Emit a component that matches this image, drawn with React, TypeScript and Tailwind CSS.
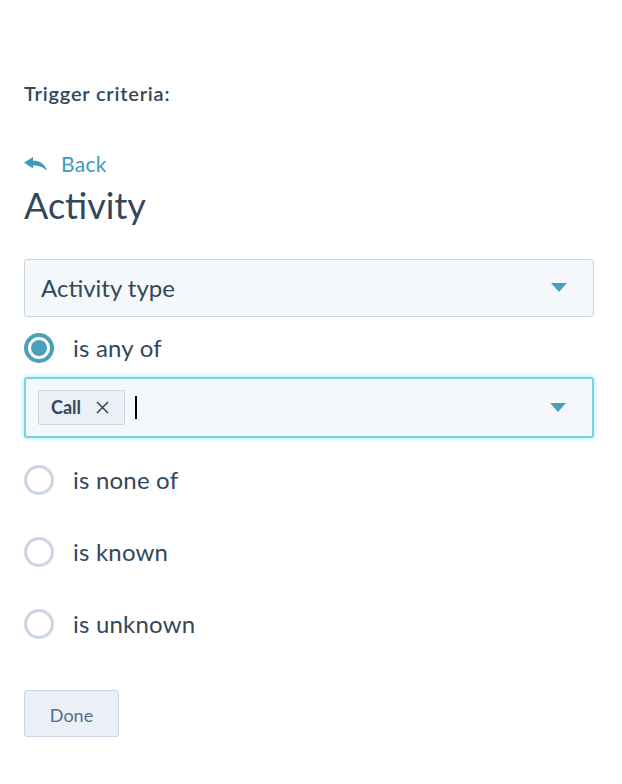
import { useState } from "react";

const options = ["is any of", "is none of", "is known", "is unknown"];

function Caret() {
  return (
    <svg width="16" height="10" viewBox="0 0 16 10" className="shrink-0">
      <path d="M0 0 H16 L8 9 Z" fill="#4aa0bb" />
    </svg>
  );
}

function Radio({ checked }: { checked: boolean }) {
  return checked ? (
    <span className="flex h-[30px] w-[30px] shrink-0 items-center justify-center rounded-full border-[4px] border-[#4aa0bb] bg-white">
      <span className="h-[16px] w-[16px] rounded-full bg-[#4aa0bb]" />
    </span>
  ) : (
    <span className="h-[30px] w-[30px] shrink-0 rounded-full border-[3px] border-[#cbd6e2] bg-white" />
  );
}

export default function App() {
  const [selected, setSelected] = useState(0);

  return (
    <div className="min-h-screen bg-white pl-6 pr-7 pt-[81px] text-[#33475b] [font-family:Lato,'Open_Sans',sans-serif]">
      <p className="text-[20px] font-semibold leading-[24px] tracking-[0.8px]">Trigger criteria:</p>

      {/* Back link */}
      <button className="mt-[46px] flex h-[26px] items-center gap-[14px] text-[#3e9ab9]">
        <svg width="23" height="15" viewBox="0 0 23 15">
          <path d="M0 5.5 L9 0 V3.5 C16 3.5 21 7 23 14 C19 10 15 8.5 9 8.5 V11.5 Z" fill="#3e9ab9" />
        </svg>
        <span className="text-[21px] leading-[26px] tracking-[0.3px]">Back</span>
      </button>

      <h1 className="mt-[6px] text-[36px] font-normal leading-[44px]">Activity</h1>

      {/* Property select */}
      <div className="mt-[32px] flex h-[58px] items-center justify-between rounded-[3px] border border-[#cbd6e2] bg-[#f5f8fa] pl-4 pr-[26px]">
        <span className="text-[24px]">Activity type</span>
        <Caret />
      </div>

      {/* Operators */}
      <div className="mt-[16px]">
        {options.map((label, i) => (
          <div key={label}>
            <button
              onClick={() => setSelected(i)}
              className={`flex h-[30px] items-center gap-[19px] ${i === 0 ? "" : i === 1 ? "mt-[27px]" : "mt-[42px]"}`}
            >
              <Radio checked={selected === i} />
              <span className="text-[24px] tracking-[0.2px]">{label}</span>
            </button>
            {i === 0 && (
              <div className="mt-[14px] flex h-[61px] items-center justify-between rounded-[3px] border-2 border-[#7fd1de] bg-[#f5f8fa] pl-[12px] pr-[26px] shadow-[0_0_4px_1px_rgba(0,208,228,0.3)]">
                <div className="flex items-center gap-[10px]">
                  <span className="flex h-[35px] items-center gap-[15px] rounded-[2px] border border-[#cbd6e2] bg-[#eaf0f6] pl-[12px] pr-[15px] text-[18px] font-bold">
                    Call
                    <svg width="13" height="13" viewBox="0 0 13 13">
                      <path d="M1 1 L12 12 M12 1 L1 12" stroke="#33475b" strokeWidth="1.5" />
                    </svg>
                  </span>
                  <span className="h-[23px] w-[2px] bg-black" />
                </div>
                <Caret />
              </div>
            )}
          </div>
        ))}
      </div>

      <button className="mt-[51px] h-[47px] w-[95px] rounded-[3px] border border-[#cbd6e2] bg-[#eaf0f6] pt-[3px] text-[18px] text-[#506e91]">
        Done
      </button>
    </div>
  );
}
